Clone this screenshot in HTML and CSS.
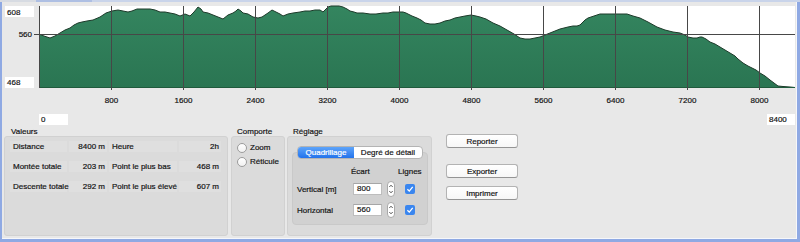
FILE: index.html
```html
<!DOCTYPE html>
<html lang="fr">
<head>
    <meta charset="UTF-8">
    <title>Profil d'altitude</title>
    <link rel="stylesheet" href="styles.css">
</head>
<body>
    <div class="window">
        <div class="titlestrip"><span class="ts-a"></span><span class="ts-b"></span><span class="ts-c"></span></div>

        <svg class="chart" width="795" height="126" viewBox="2 2 795 126">
            <defs>
                <linearGradient id="fillGreen" x1="0" y1="0" x2="0" y2="1">
                    <stop offset="0" stop-color="#34855f"/>
                    <stop offset="1" stop-color="#2a7552"/>
                </linearGradient>
            </defs>
            <rect class="plot-bg" x="39" y="6" width="756" height="82"/>
            <polygon fill="url(#fillGreen)" points="39,88 39,34 44,36 50,38 55,36 60,33 65,30 70,28 74,25 78,23 82,22 87,21 93,20 100,17 103,15 106,13 112,11 118,10 123,11 128,12 132,11 137,9 143,9 150,9 155,10 160,12 165,12 170,13 175,14 180,16 185,14 190,16 194,12 198,7 201,9 203,12 208,13 213,15 218,17 223,19 228,15 233,13 236,11 238,9 241,11 243,13 248,14 253,17 258,18 262,17 265,15 268,13 272,10 276,12 280,14 283,16 288,14 293,13 300,12 305,11 310,11 315,10 320,10 323,12 326,9 328,7 331,6 335,6 339,6 343,7 347,9 350,11 354,12 357,13 363,13 370,14 376,14 383,13 388,13 393,12 398,12 403,12 406,13 408,14 412,16 417,18 421,20 425,23 430,24 435,24 440,23 445,21 450,20 455,18 460,17 465,16 471,15 476,16 480,17 486,19 493,23 500,26 507,30 514,34 520,38 525,39 530,39 535,38 540,37 545,35 550,33 555,31 560,29 564,28 568,27 573,26 577,26 580,25 582,23 585,20 588,18 594,16 600,14 615,14 627,14 633,16 640,18 648,22 657,27 665,30 673,32 680,33 685,35 688,37 693,38 697,38 700,37 702,37 706,39 710,42 715,44 720,47 725,50 730,53 735,56 738,59 743,63 748,66 752,68 756,70 760,73 765,76 770,80 774,83 778,86 783,86.5 790,87 795,87.5 795,88"/>
            <polyline class="profile-line" points="39,34 44,36 50,38 55,36 60,33 65,30 70,28 74,25 78,23 82,22 87,21 93,20 100,17 103,15 106,13 112,11 118,10 123,11 128,12 132,11 137,9 143,9 150,9 155,10 160,12 165,12 170,13 175,14 180,16 185,14 190,16 194,12 198,7 201,9 203,12 208,13 213,15 218,17 223,19 228,15 233,13 236,11 238,9 241,11 243,13 248,14 253,17 258,18 262,17 265,15 268,13 272,10 276,12 280,14 283,16 288,14 293,13 300,12 305,11 310,11 315,10 320,10 323,12 326,9 328,7 331,6 335,6 339,6 343,7 347,9 350,11 354,12 357,13 363,13 370,14 376,14 383,13 388,13 393,12 398,12 403,12 406,13 408,14 412,16 417,18 421,20 425,23 430,24 435,24 440,23 445,21 450,20 455,18 460,17 465,16 471,15 476,16 480,17 486,19 493,23 500,26 507,30 514,34 520,38 525,39 530,39 535,38 540,37 545,35 550,33 555,31 560,29 564,28 568,27 573,26 577,26 580,25 582,23 585,20 588,18 594,16 600,14 615,14 627,14 633,16 640,18 648,22 657,27 665,30 673,32 680,33 685,35 688,37 693,38 697,38 700,37 702,37 706,39 710,42 715,44 720,47 725,50 730,53 735,56 738,59 743,63 748,66 752,68 756,70 760,73 765,76 770,80 774,83 778,86 783,86.5 790,87 795,87.5"/>
            <line class="base-line" x1="39" y1="87.5" x2="795" y2="87.5"/>

            <g class="grid">
                <line x1="39.5" y1="6" x2="39.5" y2="88"/>
                <line x1="34" y1="34.5" x2="795" y2="34.5"/>
                <line x1="111.5" y1="6" x2="111.5" y2="90"/>
                <line x1="183.5" y1="6" x2="183.5" y2="90"/>
                <line x1="255.5" y1="6" x2="255.5" y2="90"/>
                <line x1="327.5" y1="6" x2="327.5" y2="90"/>
                <line x1="399.5" y1="6" x2="399.5" y2="90"/>
                <line x1="471.5" y1="6" x2="471.5" y2="90"/>
                <line x1="543.5" y1="6" x2="543.5" y2="90"/>
                <line x1="615.5" y1="6" x2="615.5" y2="90"/>
                <line x1="687.5" y1="6" x2="687.5" y2="90"/>
                <line x1="759.5" y1="6" x2="759.5" y2="90"/>
            </g>

            <g class="axis-text">
                <rect class="field" x="5" y="6" width="29" height="11"/>
                <text x="7" y="15">608</text>
                <text x="32" y="37" text-anchor="end">560</text>
                <rect class="field" x="5" y="77" width="29" height="11"/>
                <text x="7" y="85">468</text>

                <text x="111.5" y="103" text-anchor="middle">800</text>
                <text x="183.5" y="103" text-anchor="middle">1600</text>
                <text x="255.5" y="103" text-anchor="middle">2400</text>
                <text x="327.5" y="103" text-anchor="middle">3200</text>
                <text x="399.5" y="103" text-anchor="middle">4000</text>
                <text x="471.5" y="103" text-anchor="middle">4800</text>
                <text x="543.5" y="103" text-anchor="middle">5600</text>
                <text x="615.5" y="103" text-anchor="middle">6400</text>
                <text x="687.5" y="103" text-anchor="middle">7200</text>
                <text x="759.5" y="103" text-anchor="middle">8000</text>

                <rect class="field" x="39" y="114" width="29" height="11"/>
                <text x="41" y="122">0</text>
                <rect class="field" x="767" y="114" width="28" height="11"/>
                <text x="769" y="122">8400</text>
            </g>
        </svg>

        <div class="panel">
            <section class="group group-values">
                <div class="group-title">Valeurs</div>
                <div class="group-box">
                    <div class="stats">
                        <span class="cell key">Distance</span>
                        <span class="cell val">8400 m</span>
                        <span class="cell key">Heure</span>
                        <span class="cell val">2h</span>

                        <span class="cell key">Montée totale</span>
                        <span class="cell val">203 m</span>
                        <span class="cell key">Point le plus bas</span>
                        <span class="cell val">468 m</span>

                        <span class="cell key">Descente totale</span>
                        <span class="cell val">292 m</span>
                        <span class="cell key">Point le plus élevé</span>
                        <span class="cell val">607 m</span>
                    </div>
                </div>
            </section>

            <section class="group group-mode">
                <div class="group-title">Comporte</div>
                <div class="group-box">
                    <label class="radio"><span class="radio-dot"></span>Zoom</label>
                    <label class="radio"><span class="radio-dot"></span>Réticule</label>
                </div>
            </section>

            <section class="group group-settings">
                <div class="group-title">Réglage</div>
                <div class="group-box">
                    <div class="segmented">
                        <span class="seg seg-on">Quadrillage</span>
                        <span class="seg">Degré de détail</span>
                    </div>
                    <div class="tabbox">
                        <div class="grid-form">
                            <span></span>
                            <span class="col-head head-gap">Écart</span>
                            <span></span>
                            <span class="col-head head-lines">Lignes</span>

                            <span class="row-label">Vertical [m]</span>
                            <span class="num-field">800</span>
                            <svg class="stepper" width="8" height="16" viewBox="0 0 8 16">
                                <rect x="0.5" y="0.5" width="7" height="15" rx="3.5" fill="#fff" stroke="#a9a9a9"/>
                                <path d="M2.3 6 L4 4.2 L5.7 6" fill="none" stroke="#444" stroke-width="0.9"/>
                                <path d="M2.3 10 L4 11.8 L5.7 10" fill="none" stroke="#444" stroke-width="0.9"/>
                            </svg>
                            <svg class="check" width="10" height="10" viewBox="0 0 10 10">
                                <rect x="0" y="0" width="10" height="10" rx="2" fill="#3a86ef"/>
                                <path d="M2.4 5.2 L4.3 7.1 L7.7 2.9" fill="none" stroke="#fff" stroke-width="1.3"/>
                            </svg>

                            <span class="row-label">Horizontal</span>
                            <span class="num-field">560</span>
                            <svg class="stepper" width="8" height="16" viewBox="0 0 8 16">
                                <rect x="0.5" y="0.5" width="7" height="15" rx="3.5" fill="#fff" stroke="#a9a9a9"/>
                                <path d="M2.3 6 L4 4.2 L5.7 6" fill="none" stroke="#444" stroke-width="0.9"/>
                                <path d="M2.3 10 L4 11.8 L5.7 10" fill="none" stroke="#444" stroke-width="0.9"/>
                            </svg>
                            <svg class="check" width="10" height="10" viewBox="0 0 10 10">
                                <rect x="0" y="0" width="10" height="10" rx="2" fill="#3a86ef"/>
                                <path d="M2.4 5.2 L4.3 7.1 L7.7 2.9" fill="none" stroke="#fff" stroke-width="1.3"/>
                            </svg>
                        </div>
                    </div>
                </div>
            </section>

            <div class="actions">
                <button class="btn btn-report">Reporter</button>
                <button class="btn btn-export">Exporter</button>
                <button class="btn">Imprimer</button>
            </div>
        </div>
    </div>
</body>
</html>
```

FILE: styles.css
```css
html, body {
    margin: 0;
    padding: 0;
}
body {
    width: 800px;
    height: 242px;
    overflow: hidden;
    font-family: "Liberation Sans", Arial, sans-serif;
    font-size: 8px;
    color: #151515;
    -webkit-text-stroke: 0.2px;
    background-color: #e8e8e8;
}
.window {
    box-sizing: border-box;
    width: 800px;
    height: 242px;
    border-style: solid;
    border-color: #8fa9e3;
    border-width: 0 3px 3px 2px;
    background-color: #e8e8e8;
    box-shadow: inset -1px -1px 0 #f6f7fa;
}
.titlestrip {
    display: flex;
    height: 2px;
    margin-left: -2px;
    margin-right: -3px;
}
.ts-a {
    width: 36px;
    background-color: #d7dbe2;
}
.ts-b {
    width: 56px;
    background-color: #aebfe3;
}
.ts-c {
    flex: 1;
    background-color: #c9d4ea;
}
.chart {
    display: block;
}
.plot-bg {
    fill: #fff;
}
.profile-line {
    fill: none;
    stroke: #1d3a2a;
    stroke-width: 1;
}
.base-line {
    stroke: #1f5a3c;
    stroke-width: 1;
}
.grid line {
    stroke: #474747;
    stroke-width: 1;
}
.axis-text text {
    font-family: "Liberation Sans", Arial, sans-serif;
    font-size: 8px;
    fill: #151515;
    stroke: #151515;
    stroke-width: 0.2px;
}
.axis-text .field {
    fill: #fff;
    stroke: none;
}

/* bottom panel */
.panel {
    display: flex;
    align-items: flex-start;
    padding-left: 2px;
}
.group-title {
    height: 8px;
    line-height: 8px;
    padding-left: 7px;
}
.group-box {
    box-sizing: border-box;
    height: 100px;
    background-color: #dbdbdb;
    border: 1px solid #d1d1d1;
    border-radius: 3px;
}
.group-values {
    width: 224px;
}
.group-values .group-box {
    padding: 4px 0 0 5px;
}
.stats {
    display: grid;
    grid-template-columns: 57px 38px 68px 42px;
    grid-auto-rows: 11px;
    column-gap: 2px;
    row-gap: 9px;
}
.cell {
    line-height: 11px;
    white-space: nowrap;
    background-color: #dfdfdf;
}
.key {
    padding-left: 3px;
}
.val {
    text-align: right;
    padding-right: 2px;
}

.group-mode {
    width: 54px;
    margin-left: 3px;
}
.group-mode .group-title {
    padding-left: 6px;
}
.group-mode .group-box {
    display: flex;
    flex-direction: column;
    gap: 3px;
    padding: 5px 0 0 5px;
}
.radio {
    display: flex;
    align-items: center;
    gap: 3px;
    height: 11px;
}
.radio-dot {
    box-sizing: border-box;
    width: 10px;
    height: 10px;
    border-radius: 50%;
    border: 1px solid #9c9c9c;
    background: linear-gradient(#ffffff, #f1f1f1);
}

.group-settings {
    width: 145px;
    margin-left: 2px;
}
.group-settings .group-title {
    padding-left: 6px;
}
.group-settings .group-box {
    padding: 9px 3px 0 4px;
}
.segmented {
    position: relative;
    z-index: 1;
    display: flex;
    width: 126px;
    height: 13px;
    margin: 0 auto;
    box-sizing: border-box;
    border: 1px solid #b4b4b4;
    border-radius: 4px;
    background-color: #fff;
    overflow: hidden;
}
.seg {
    line-height: 11px;
    text-align: center;
    white-space: nowrap;
}
.seg:first-child {
    width: 56px;
}
.seg:last-child {
    flex: 1;
}
.seg-on {
    color: #fff;
    background: linear-gradient(#5ea4fa, #2273ec);
}
.tabbox {
    box-sizing: border-box;
    height: 73px;
    margin-top: -7px;
    padding: 14px 0 0 4px;
    background-color: #d1d1d1;
    border: 1px solid #c9c9c9;
    border-radius: 4px;
}
.grid-form {
    display: grid;
    grid-template-columns: 56px 34px 18px 10px;
    grid-template-rows: 9px 16px 16px;
    row-gap: 5px;
    align-items: center;
}
.col-head {
    line-height: 9px;
    white-space: nowrap;
}
.head-gap {
    margin-left: -2px;
}
.head-lines {
    margin-left: -7px;
}
.row-label {
    white-space: nowrap;
}
.num-field {
    box-sizing: border-box;
    width: 29px;
    height: 12px;
    line-height: 10px;
    padding-left: 3px;
    background-color: #fff;
    border: 1px solid #bdbdbd;
    border-top-color: #a6a6a6;
}
.stepper, .check {
    display: block;
}

.actions {
    display: flex;
    flex-direction: column;
    margin-left: 14px;
    padding-top: 6px;
}
.btn {
    box-sizing: border-box;
    width: 72px;
    height: 14px;
    padding: 0;
    font-family: "Liberation Sans", Arial, sans-serif;
    font-size: 8px;
    color: #151515;
    -webkit-text-stroke: 0.2px;
    background: linear-gradient(#ffffff, #f7f7f7);
    border: 1px solid #b3b3b3;
    border-bottom-color: #949494;
    border-radius: 3px;
}
.btn-export {
    margin-top: 16px;
}
.btn + .btn:not(.btn-export) {
    margin-top: 8px;
}
```
